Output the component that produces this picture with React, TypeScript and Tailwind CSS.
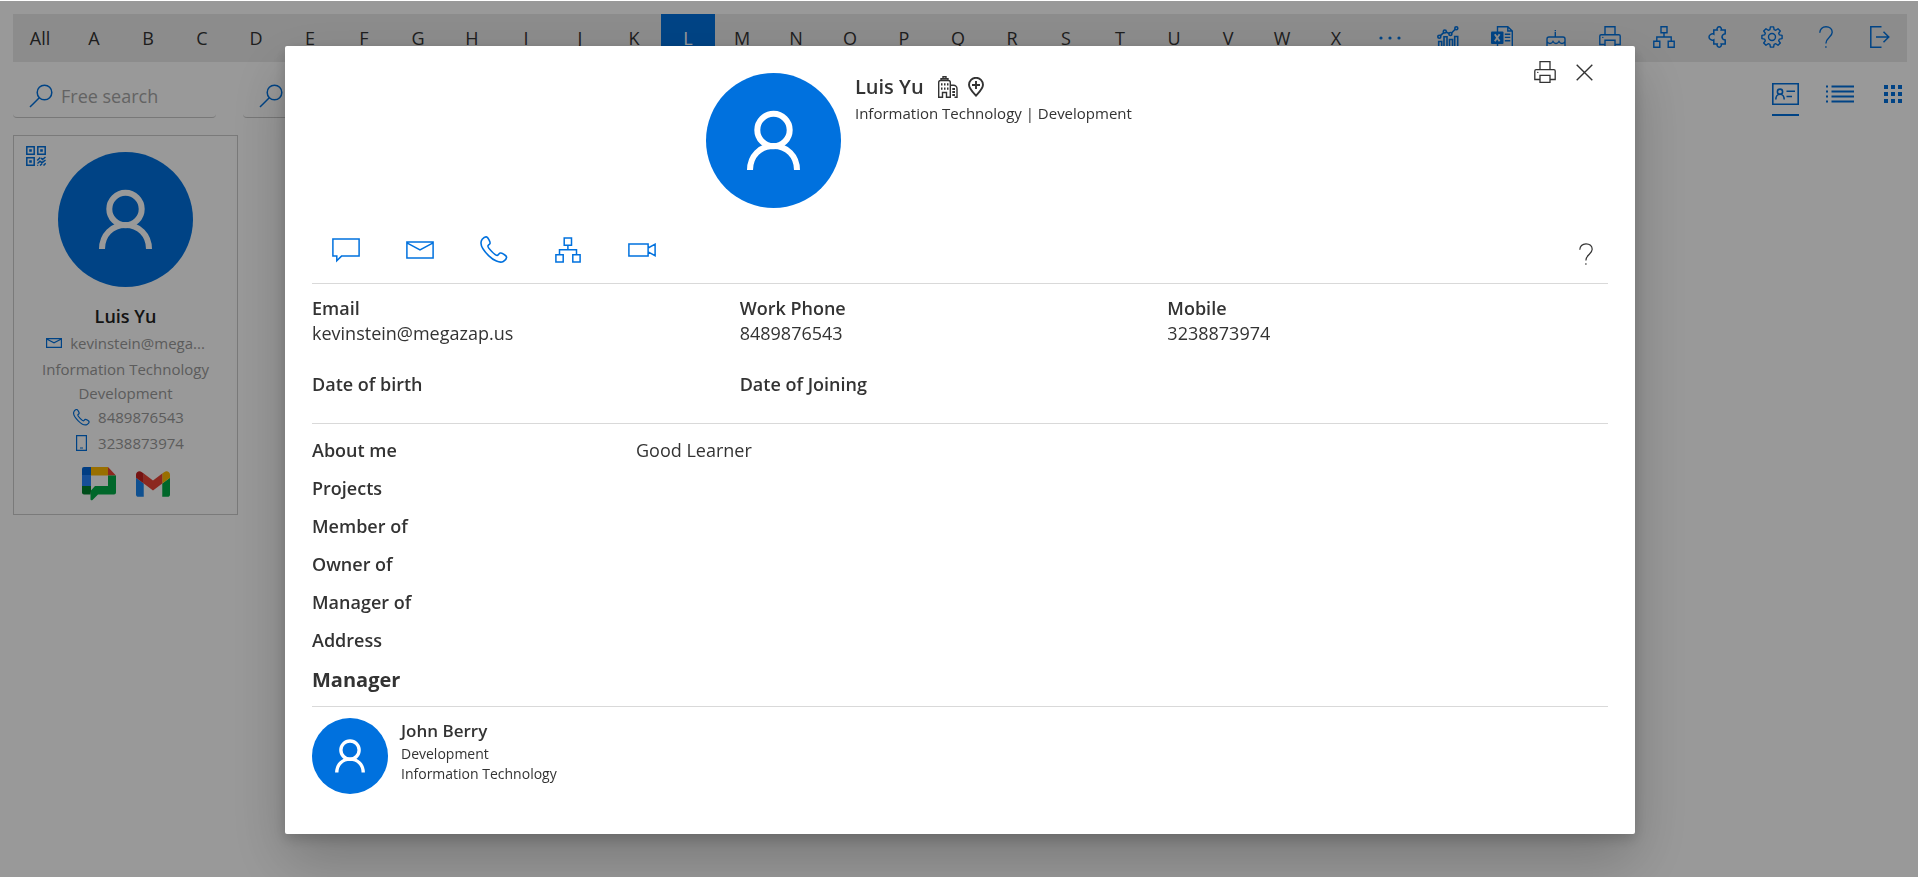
import React from "react";

type IconProps = { w: number; h: number; sw?: number; className?: string; children: React.ReactNode };

function Icon({ w, h, sw = 1.3, className = "", children }: IconProps) {
  return (
    <svg
      width={w}
      height={h}
      viewBox={`0 0 ${w} ${h}`}
      fill="none"
      stroke="currentColor"
      strokeWidth={sw}
      aria-hidden="true"
      className={"block shrink-0 " + className}
    >
      {children}
    </svg>
  );
}

const SearchIcon = () => (
  <Icon w={24} h={24} sw={1.5}>
    <circle cx="15.5" cy="8.5" r="7.3" />
    <path d="M10.3 13.7 1 23" />
  </Icon>
);

const MoreIcon = () => (
  <Icon w={22} h={22}>
    <g fill="currentColor" stroke="none">
      <circle cx="2" cy="11" r="1.6" />
      <circle cx="11" cy="11" r="1.6" />
      <circle cx="20" cy="11" r="1.6" />
    </g>
  </Icon>
);

const ChartIcon = () => (
  <Icon w={22} h={22} sw={1.6}>
    <path d="M1.7 22v-6.5h3V22M7 22V10.7h3V22M12.5 22v-8.5h3V22M17.7 22V10.500h3V22" />
    <circle cx="2.3" cy="10.8" r="1.5" />
    <circle cx="7.8" cy="5.5" r="1.5" />
    <circle cx="13.4" cy="8" r="1.5" />
    <circle cx="19.3" cy="2.3" r="1.5" />
    <path d="m3.4 9.7 3.3-3.1M9.2 6.1l2.8 1.3M14.5 7l3.7-3.7" />
  </Icon>
);

const ExcelIcon = () => (
  <Icon w={22} h={22} sw={1.4}>
    <path d="M6.5 6V.8h10.3L21.3 5v16.2H6.5V16M16.8.8V5h4.5" />
    <rect x="0" y="5.500" width="12.5" height="12.5" rx="1" fill="currentColor" stroke="none" />
    <path d="m3.8 8.2 4.8 7M8.6 8.2l-4.8 7" stroke="#eaeaea" strokeWidth="1.9" />
    <path d="M13.8 8.2h5.5M13.8 11.4h5.5M13.8 14.7h5.5" />
  </Icon>
);

const CakeIcon = () => (
  <Icon w={20} h={22} sw={1.4}>
    <path d="M9.300 6v5M9.300 4v1.200M1 21.300V13a2 2 0 0 1 2-2h14a2 2 0 0 1 2 2v8.300zM1 15.500c1.500 2.600 4.500 2.600 6 0 1.500 2.600 4.500 2.600 6 0 1.500 2.600 4.500 2.600 6 0" />
  </Icon>
);

const PrintIcon = ({ sw = 1.4 }: { sw?: number }) => (
  <Icon w={22} h={22} sw={sw}>
    <path d="M6 8.700V.7h10v8M6 18.500H.8v-8.400c0-.9.500-1.400 1.300-1.400h17.800c.8 0 1.300.5 1.300 1.400v8.400H16" />
    <path d="M6 14.300h10v7H6z" />
    <circle cx="3.800" cy="11.400" r=".7" fill="currentColor" stroke="none" />
  </Icon>
);

const OrgIcon = () => (
  <Icon w={26} h={26} sw={1.500}>
    <path d="M9.200.9h7.300v7.300H9.200zM.9 17.800h7.300v7.300H.9zM17.800 17.800h7.300v7.300h-7.300zM12.900 8.200v4.500M4.500 17.800v-5.100h17v5.100" />
  </Icon>
);

const OrgSmallIcon = () => (
  <Icon w={22} h={22} sw={1.400}>
    <path d="M8 .8h6v6H8zM.8 15.200h6v6h-6zM15.200 15.200h6v6h-6zM11 6.800v4.200M3.800 15.200V11h14.400v4.200" />
  </Icon>
);

const PuzzleIcon = () => (
  <Icon w={20} h={22} sw={1.500}>
    <path d="M5.800 4h3.400c-.6-1.600.4-3.200 2-3.200s2.600 1.600 2 3.200h4v3.900c-.9.300-1.600.1-2.400 1-.8 1-.8 3 0 4 .8.900 1.500.7 2.400 1V18h-4c.6 1.600-.4 3.200-2 3.200S8.600 19.600 9.200 18H5.800v-4.200c-1.800.9-4.800-.3-4.800-2.800s3-3.700 4.800-2.800z" />
  </Icon>
);

const GearIcon = () => (
  <Icon w={22} h={22} sw={1.400}>
    <circle cx="11" cy="11" r="3.500" />
    <path
      strokeLinejoin="round"
      d="M9.400.9h3.200l.5 2.700 1.700.7L17 2.700 19.300 5l-1.600 2.200.7 1.700 2.700.5v3.200l-2.700.5-.7 1.700 1.600 2.200-2.300 2.300-2.200-1.600-1.700.7-.5 2.700H9.400l-.5-2.700-1.700-.7L5 19.300 2.700 17l1.600-2.200-.7-1.700-2.700-.5V9.400l2.700-.5.7-1.700L2.700 5 5 2.700l2.200 1.600 1.700-.7z"
    />
  </Icon>
);

const HelpIcon = ({ sw = 1.400 }: { sw?: number }) => (
  <Icon w={14} h={22} sw={sw}>
    <path d="M.8 6.800C.8 3.300 3.300.8 7 .8s6.200 2.200 6.200 5.500c0 4.700-6.300 5.300-6.300 11.200M6.900 20.200v1.600" />
  </Icon>
);

const ExitIcon = () => (
  <Icon w={20} h={22} sw={1.500}>
    <path d="M11.500.8H.8v20.400h10.700M6 11h12.800M13.500 5.700l5.300 5.300-5.300 5.300" />
  </Icon>
);

const CardViewIcon = () => (
  <Icon w={27} h={22} sw={1.600}>
    <path d="M.8.8h25.400v20.400H.8z" />
    <circle cx="8" cy="8.700" r="2.600" />
    <path d="M3.800 16.500c0-2.900 1.700-5.200 4.200-5.200s4.200 2.300 4.200 5.200M14.500 8.300h8.500M14.500 13.500H20" />
  </Icon>
);

const ListViewIcon = () => (
  <Icon w={28} h={18} sw={1.800}>
    <path d="M5.500 1.500H28M5.500 6.500H28M5.500 11.500H28M5.500 16.500H28M0 1.500h2M0 6.500h2M0 11.500h2M0 16.500h2" />
  </Icon>
);

const GridViewIcon = () => (
  <Icon w={18} h={18} sw={4}>
    <path d="M0 2h4M7 2h4M14 2h4M0 9h4M7 9h4M14 9h4M0 16h4M7 16h4M14 16h4" />
  </Icon>
);

const QrIcon = () => (
  <Icon w={20} h={20} sw={1.500}>
    <path d="M.8.8h7.400v7.400H.8zM11.800.8h7.400v7.400h-7.400zM.8 11.800h7.400v7.400H.8z" />
    <path
      d="M3.200 3.200h2.600v2.600H3.200zM14.200 3.200h2.600v2.600h-2.600zM3.200 14.200h2.600v2.600H3.200z"
      fill="currentColor"
      stroke="none"
    />
    <path d="m11.200 14.500 3-3M15 12l1.500 1.500L19.500 11M11.500 17.500l2.500-2.300 2 1.500 3.500-2.700M14 19.500l2-1.800M17.500 19.500l2.200-2.200M11.200 19.500h1" />
  </Icon>
);

const ChatIcon = () => (
  <Icon w={28} h={26} sw={1.500}>
    <path d="M.9 1.900h26.200v17.200H9.500L4.800 23.800v-4.700H.9z" />
  </Icon>
);

const MailIcon = () => (
  <Icon w={28} h={18} sw={1.500}>
    <path d="M.9.9h26.200v16.200H.9zM.9 1.800 14 8.800l13.100-7" />
  </Icon>
);

const MailSmallIcon = () => (
  <Icon w={16} h={10} sw={1.200}>
    <path d="M.6.6h14.800v8.800H.6zM.6 1 8 4.800 15.400 1" />
  </Icon>
);

const PHONE =
  "M2.200 3.300C3.600 1.600 5.200.6 6.500.9c1 .2 1.700 1.300 2.400 2.700.9 1.800 1.500 2.800 1.100 3.800-.4 1.100-1.900 1.500-2.100 2.600-.3 1.800 7.400 9.600 9.400 9.400 1.300-.2 1.500-1.900 2.900-2.300 1.300-.4 2.300.4 3.900 1.400 1.500.9 2.600 1.600 2.500 2.900-.1 1.500-1.500 3.100-3.300 4.100-3.600 1.900-9.900-1.100-14.700-5.900C3 14 -1 7.500 2.200 3.300z";

const PhoneIcon = () => (
  <Icon w={28} h={28} sw={1.600}>
    <path d={PHONE} />
  </Icon>
);

const PhoneSmallIcon = () => (
  <svg width="17" height="17" viewBox="0 0 28 28" fill="none" stroke="currentColor" strokeWidth="2" aria-hidden="true" className="block shrink-0">
    <path d={PHONE} />
  </svg>
);

const MobileIcon = () => (
  <Icon w={17} h={16} sw={1.200}>
    <path d="M3.600.6h9.800v14.800H3.600zM7 13h3" />
  </Icon>
);

const VideoIcon = () => (
  <Icon w={28} h={14} sw={1.500}>
    <path d="M.9.9h19.200v12H.9zM20.100 5l7-3.800v11.500l-7-3.800" />
  </Icon>
);

const BuildingIcon = () => (
  <Icon w={20} h={22} sw={1.400}>
    <path d="M.7 21.300V6.500c0-1.400.8-2 2-2h7.600c1.200 0 2 .6 2 2v14.800H8.500v-4.800h-4v4.800zM3 4.500V2.800h7v1.700M5 2.800V.8h3v2M12.300 9.200h3.200a3.500 3.500 0 0 1 3.500 3.500v8.600h-2.500" />
    <path d="M3 8.300h1.500M6 8.300h1.500M9 8.300h1.500M3 12.700h1.500M6 12.700h1.500M9 12.700h1.500M14.300 13H17M14.300 16H17M14.300 19H17" strokeWidth="2.200" />
  </Icon>
);

const PinIcon = () => (
  <Icon w={16} h={20} sw={1.900}>
    <path d="M8 18.700C5.300 15.700 1 11.700 1 7.800a7 7 0 0 1 14 0c0 3.900-4.300 7.900-7 10.900zM8 4v8M4 8h8" />
  </Icon>
);

const CloseIcon = () => (
  <Icon w={17} h={17} sw={1.400}>
    <path d="m.7.700 15.600 15.600M16.300.7.7 16.300" />
  </Icon>
);

const GoogleChatIcon = () => (
  <svg width="34" height="34" viewBox="0 0 34 34" aria-hidden="true" className="block">
    <path d="M9 0H2a2 2 0 0 0-2 2v17h9z" fill="#0066da" />
    <path d="M0 8h9v11H0z" fill="#2684fc" />
    <path d="M9 0h17v8.500H9z" fill="#ffba00" />
    <path d="m26 0 8 8.500h-8z" fill="#ea4335" />
    <path d="M26 8.500h8v17a2 2 0 0 1-2 2H16L10.500 33c-.8.700-2 .2-2-.8V24l4.500-5h13z" fill="#00ac47" />
    <path d="M0 19h9v5l-.5 3.500H2a2 2 0 0 1-2-2z" fill="#00832d" />
  </svg>
);

const GmailIcon = () => (
  <svg width="34" height="26" viewBox="52 42 88 66" aria-hidden="true" className="block">
    <path fill="#1a86f0" d="M58 108h14V74L52 59v43c0 3.320 2.690 6 6 6" />
    <path fill="#00ac47" d="M120 108h14c3.320 0 6-2.690 6-6V59l-20 15" />
    <path fill="#ffba00" d="M120 48v26l20-15v-8c0-7.420-8.470-11.650-14.400-7.200" />
    <path fill="#ea4335" d="M72 74V48l24 18 24-18v26L96 92" />
    <path fill="#c5221f" d="M52 51v8l20 15V48l-5.600-4.200c-5.940-4.450-14.400-.22-14.400 7.200" />
  </svg>
);

function Avatar({ className }: { className: string }) {
  return (
    <div className={"shrink-0 overflow-hidden rounded-full bg-[#0071de] text-white " + className}>
      <svg viewBox="0 0 135 135" fill="none" stroke="currentColor" strokeWidth="6" aria-hidden="true" className="block size-full">
        <circle cx="67.500" cy="57" r="16.200" />
        <path d="M44 97C44 83 54 73 67.500 73S91 83 91 97" />
      </svg>
    </div>
  );
}

const LETTERS = ["All", ..."ABCDEFGHIJKLMNOPQRSTUVWX".split("")];

const TOOLS = [
  { label: "Analytics", icon: <ChartIcon /> },
  { label: "Export to Excel", icon: <ExcelIcon /> },
  { label: "Birthdays", icon: <CakeIcon /> },
  { label: "Print directory", icon: <PrintIcon /> },
  { label: "Organization chart", icon: <OrgSmallIcon /> },
  { label: "Extensions", icon: <PuzzleIcon /> },
  { label: "Settings", icon: <GearIcon /> },
  { label: "Help", icon: <HelpIcon /> },
  { label: "Sign out", icon: <ExitIcon /> },
];

const ACTIONS = [
  { label: "Chat", icon: <ChatIcon /> },
  { label: "Mail", icon: <MailIcon /> },
  { label: "Call", icon: <PhoneIcon /> },
  { label: "Organization chart", icon: <OrgIcon /> },
  { label: "Video call", icon: <VideoIcon /> },
];

const CONTACT = [
  { label: "Email", value: "kevinstein@megazap.us" },
  { label: "Work Phone", value: "8489876543" },
  { label: "Mobile", value: "3238873974" },
];

const DETAILS = [
  { label: "About me", value: "Good Learner" },
  { label: "Projects", value: "" },
  { label: "Member of", value: "" },
  { label: "Owner of", value: "" },
  { label: "Manager of", value: "" },
  { label: "Address", value: "" },
];

function AlphabetBar() {
  return (
    <nav aria-label="Directory" className="flex h-12 items-stretch justify-between bg-[#eaeaea]">
      <div className="flex">
        {LETTERS.map((l) => (
          <button
            key={l}
            type="button"
            className={l === "L" ? "w-[54px] bg-[#0071de] text-white" : "w-[54px] text-[#333]"}
          >
            {l}
          </button>
        ))}
        <button type="button" aria-label="More letters" className="flex w-[54px] items-center justify-center text-[#0071de]">
          <MoreIcon />
        </button>
      </div>
      <div className="flex text-[#0071de]">
        {TOOLS.map((t) => (
          <button key={t.label} type="button" aria-label={t.label} className="flex w-[54px] items-start justify-center pt-3">
            {t.icon}
          </button>
        ))}
      </div>
    </nav>
  );
}

function SearchBox({ label, placeholder }: { label: string; placeholder?: string }) {
  return (
    <label className="flex h-11 w-[203px] items-center gap-2 rounded border-b border-[#c8c8c8] pl-4 text-[#0071de]">
      <SearchIcon />
      <input
        type="text"
        aria-label={label}
        placeholder={placeholder}
        className="w-full min-w-0 bg-transparent text-[#333] outline-none placeholder:text-[#a6a6a6]"
      />
    </label>
  );
}

function PersonCard() {
  return (
    <article className="relative mt-[17px] flex w-[225px] flex-col items-center border border-[#ccc] pt-4 pb-[13px] text-[15px] leading-6 text-[#999]">
      <button type="button" aria-label="Show QR code" className="absolute top-2.5 left-3 text-[#0071de]">
        <QrIcon />
      </button>
      <Avatar className="size-[135px]" />
      <h2 className="mt-4 text-lg leading-[26px] font-semibold text-[#222]">Luis Yu</h2>
      <div className="mt-0.5 mb-0.5 flex items-center gap-2">
        <span className="text-[#0071de]"><MailSmallIcon /></span>
        kevinstein@mega...
      </div>
      <div>Information Technology</div>
      <div>Development</div>
      <div className="mb-0.5 flex items-center gap-2 pl-1.5">
        <span className="text-[#0071de]"><PhoneSmallIcon /></span>
        8489876543
      </div>
      <div className="flex items-center gap-2 pl-1.5">
        <span className="text-[#0071de]"><MobileIcon /></span>
        3238873974
      </div>
      <div className="mt-3 flex items-center gap-5">
        <button type="button" aria-label="Google Chat"><GoogleChatIcon /></button>
        <button type="button" aria-label="Gmail"><GmailIcon /></button>
      </div>
    </article>
  );
}

function ProfileDialog() {
  return (
    <section
      role="dialog"
      aria-modal="true"
      aria-label="Luis Yu"
      className="w-full max-w-[1350px] rounded-xs bg-white px-[27px] pt-[27px] pb-10 text-[#333] shadow-[0_26px_58px_rgba(0,0,0,0.22),0_5px_14px_rgba(0,0,0,0.18)]"
    >
      <header className="flex items-start">
        <div className="w-[30.4%] shrink-0" />
        <Avatar className="size-[135px]" />
        <div className="pl-3.5">
          <div className="flex items-center">
            <h1 className="text-xl leading-7 font-semibold">Luis Yu</h1>
            <div className="flex items-center gap-2.5 pl-3.5">
              <button type="button" aria-label="Office"><BuildingIcon /></button>
              <button type="button" aria-label="Add location"><PinIcon /></button>
            </div>
          </div>
          <p className="text-[15px] leading-6">Information Technology | Development</p>
        </div>
        <div className="-mt-3 ml-auto flex items-center gap-5 pr-[15px]">
          <button type="button" aria-label="Print profile"><PrintIcon sw={1.300} /></button>
          <button type="button" aria-label="Close"><CloseIcon /></button>
        </div>
      </header>

      <div className="flex h-[75px] items-center justify-between pt-2">
        <div className="flex gap-[18px] pl-1.5 text-[#0071de]">
          {ACTIONS.map((a) => (
            <button key={a.label} type="button" aria-label={a.label} className="flex h-10 w-14 items-center justify-center">
              {a.icon}
            </button>
          ))}
        </div>
        <button type="button" aria-label="Help" className="mr-[15px] pt-2"><HelpIcon sw={1.200} /></button>
      </div>

      <dl className="grid grid-cols-[33%_33%_33%] border-t border-[#d9d9d9] pt-3 leading-[25px]">
        {CONTACT.map((c) => (
          <div key={c.label}>
            <dt className="font-semibold">{c.label}</dt>
            <dd>{c.value}</dd>
          </div>
        ))}
      </dl>
      <dl className="grid grid-cols-[33%_33%_33%] py-[26px] leading-[25px]">
        <dt className="font-semibold">Date of birth</dt>
        <dt className="font-semibold">Date of Joining</dt>
      </dl>

      <dl className="border-t border-[#d9d9d9] pt-[7px]">
        {DETAILS.map((d) => (
          <div key={d.label} className="grid grid-cols-[25%_75%] leading-[38px]">
            <dt className="font-semibold">{d.label}</dt>
            <dd>{d.value}</dd>
          </div>
        ))}
      </dl>

      <h2 className="border-b border-[#d9d9d9] pt-px pb-1.5 text-xl leading-10 font-bold">Manager</h2>
      <div className="mt-[11px] flex">
        <Avatar className="size-[76px]" />
        <div className="pl-[13px] text-sm leading-5">
          <div className="text-[17px] leading-[26px] font-semibold">John Berry</div>
          <div>Development</div>
          <div>Information Technology</div>
        </div>
      </div>
    </section>
  );
}

export default function App() {
  return (
    <div className="min-h-screen bg-white pt-px font-['Open_Sans','Noto_Sans',sans-serif] text-lg">
      <main className="pt-[13px] pr-[11px] pl-[13px]">
        <AlphabetBar />
        <div className="mt-3 flex items-start justify-between">
          <div className="flex gap-[27px]">
            <SearchBox label="Free search" placeholder="Free search" />
            <SearchBox label="Search" />
          </div>
          <div className="flex items-start gap-[27px] pt-[9px] pr-[5px] text-[#0071de]">
            <button type="button" aria-label="Card view" className="border-b-2 border-[#0071de] pb-[9px]"><CardViewIcon /></button>
            <button type="button" aria-label="List view" className="flex h-[22px] items-center"><ListViewIcon /></button>
            <button type="button" aria-label="Grid view" className="flex h-[22px] items-center pl-[3px]"><GridViewIcon /></button>
          </div>
        </div>
        <PersonCard />
      </main>
      <div className="fixed inset-x-0 top-px bottom-0 flex items-center justify-center overflow-hidden bg-black/40 pt-0.5 pl-0.5">
        <ProfileDialog />
      </div>
    </div>
  );
}
